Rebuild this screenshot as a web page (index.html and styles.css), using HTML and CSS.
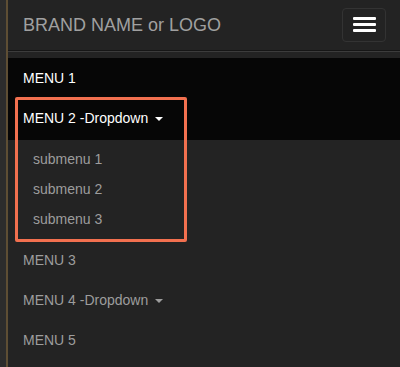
FILE: index.html
```html
<!DOCTYPE html>
<html lang="en">
<head>
  <meta charset="UTF-8" />
  <title>Navbar mobile</title>
  <meta name="viewport" content="width=device-width, initial-scale=1" />
  <link rel="stylesheet" href="styles.css">
</head>
<body>
  <div class="edge"></div>
  <div class="app">
    <!-- Barra superior -->
    <header class="navbar">
      <a class="brand" href="#">BRAND NAME or LOGO</a>
      <button type="button" class="toggle" aria-label="Menu">
        <span class="bar"></span>
        <span class="bar"></span>
        <span class="bar"></span>
      </button>
    </header>

    <!-- Menu aberto -->
    <nav class="collapse">
      <ul class="nav">
        <li class="active"><a href="#">MENU 1</a></li>
        <li class="active open">
          <a href="#">MENU 2 -Dropdown<span class="caret"></span></a>
          <ul class="dropdown">
            <li><a href="#">submenu 1</a></li>
            <li><a href="#">submenu 2</a></li>
            <li><a href="#">submenu 3</a></li>
          </ul>
        </li>
        <li><a href="#">MENU 3</a></li>
        <li><a href="#">MENU 4 -Dropdown<span class="caret"></span></a></li>
        <li><a href="#">MENU 5</a></li>
      </ul>
    </nav>
  </div>
  <div class="highlight"></div>
</body>
</html>
```

FILE: styles.css
```css
body {
  margin: 0;
  background: #232323;
  font-family: 'Liberation Sans', Arial, sans-serif;
  display: flex;
  min-height: 100vh;
  position: relative;
}
.edge {
  width: 6px;
  background: #2c2c2c;
  border-right: 2px solid #5e4e34;
  flex-shrink: 0;
}
.app {
  flex: 1;
  background: #232323;
}
.navbar {
  height: 50px;
  display: flex;
  align-items: center;
  justify-content: space-between;
  padding: 0 14px 0 15px;
  border-bottom: 1px solid #161616;
  box-shadow: 0 1px 0 #3c3c3c;
}
.brand {
  color: #a0a0a0;
  font-size: 18px;
  line-height: 20px;
  text-decoration: none;
}
.toggle {
  width: 44px;
  height: 34px;
  background: none;
  border: 1px solid #333;
  border-radius: 4px;
  display: flex;
  flex-direction: column;
  align-items: center;
  justify-content: center;
  gap: 3px;
  padding: 0;
  margin-top: -1px;
}
.bar {
  display: block;
  width: 23px;
  height: 3px;
  background: #fff;
  border-radius: 1px;
}
.collapse {
  padding-top: 7px;
}
.nav {
  list-style: none;
  margin: 0;
  padding: 0;
}
.nav > li > a {
  display: block;
  padding: 10px 15px;
  line-height: 20px;
  font-size: 14px;
  color: #9d9d9d;
  text-decoration: none;
}
.nav > li.active > a {
  background: #060606;
  color: #fff;
}
.nav > li.open > a {
  padding-bottom: 12px;
}
.caret {
  display: inline-block;
  width: 0;
  height: 0;
  margin-left: 7px;
  vertical-align: middle;
  border-top: 4px solid;
  border-left: 4px solid transparent;
  border-right: 4px solid transparent;
}
.dropdown {
  list-style: none;
  margin: 0;
  padding: 4px 0 6px;
}
.dropdown a {
  display: block;
  padding: 5px 15px 5px 25px;
  line-height: 20px;
  font-size: 14px;
  color: #9d9d9d;
  text-decoration: none;
}
.highlight {
  position: absolute;
  left: 15px;
  top: 97px;
  width: 166px;
  height: 139px;
  border: 3px solid #f2704f;
  border-radius: 2px;
  pointer-events: none;
}
```
